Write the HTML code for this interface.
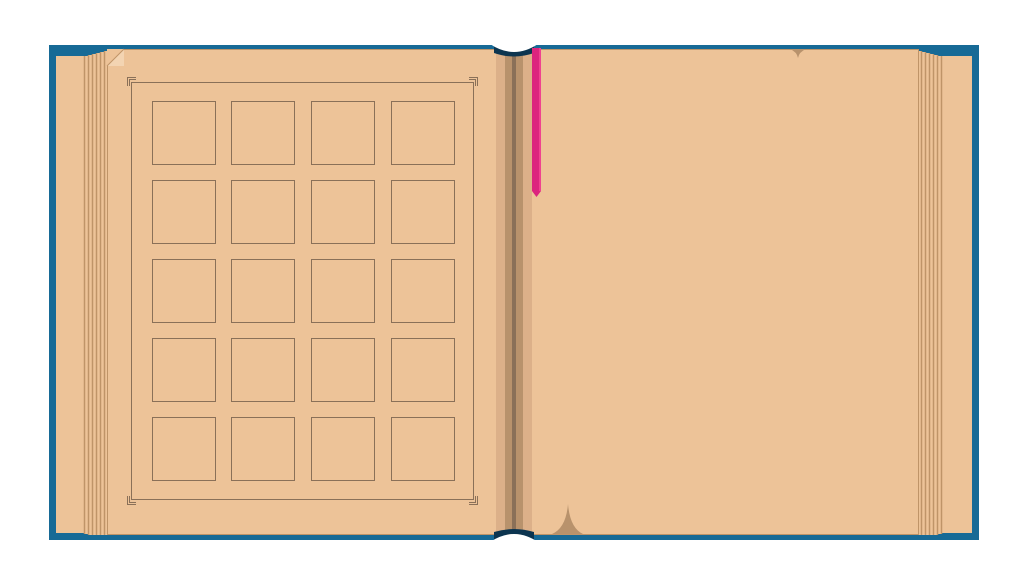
<!DOCTYPE html><html><head><style>
body{margin:0;width:1024px;height:576px;background:#fff;position:relative;overflow:hidden}
div{position:absolute;box-sizing:border-box}
.sq{width:64px;height:64px;border:1px solid #8a7058}
</style></head><body>
<div style="left:49px;top:45px;width:930px;height:495px;background:#176a96"></div>
<div style="left:56px;top:56px;width:30px;height:477px;background:#edc398"></div>
<div style="left:942px;top:56px;width:30px;height:477px;background:#edc398"></div>
<svg style="position:absolute;left:0;top:0" width="1024" height="576">
<g fill="#edc398">
<rect x="84" y="56" width="24" height="478"/><rect x="88" y="55" width="20" height="480"/><rect x="92" y="54" width="16" height="481"/><rect x="96" y="53" width="12" height="482"/><rect x="100" y="52" width="8" height="483"/><rect x="104" y="51" width="4" height="484"/>
<rect x="918" y="56" width="24" height="478"/><rect x="918" y="55" width="20" height="480"/><rect x="918" y="54" width="16" height="481"/><rect x="918" y="53" width="12" height="482"/><rect x="918" y="52" width="8" height="483"/><rect x="918" y="51" width="4" height="484"/>
</g>
<g stroke="#bf9468" stroke-width="1.5">
<line x1="84.5" y1="56" x2="84.5" y2="534"/><line x1="88.5" y1="55" x2="88.5" y2="535"/><line x1="92.5" y1="54" x2="92.5" y2="535"/><line x1="96.5" y1="53" x2="96.5" y2="535"/><line x1="100.5" y1="52" x2="100.5" y2="535"/><line x1="104.5" y1="51" x2="104.5" y2="535"/>
<line x1="921.5" y1="51" x2="921.5" y2="535"/><line x1="925.5" y1="52" x2="925.5" y2="535"/><line x1="929.5" y1="53" x2="929.5" y2="535"/><line x1="933.5" y1="54" x2="933.5" y2="535"/><line x1="937.5" y1="55" x2="937.5" y2="535"/><line x1="941.5" y1="56" x2="941.5" y2="534"/>
</g>
<rect x="107" y="49" width="390" height="486" fill="#edc398"/>
<rect x="531" y="49" width="388" height="486" fill="#edc398"/>
<line x1="107.5" y1="66" x2="107.5" y2="535" stroke="#bf9468"/><line x1="918.5" y1="49" x2="918.5" y2="535" stroke="#bf9468"/>
<line x1="124" y1="49.5" x2="497" y2="49.5" stroke="#bf9468"/><line x1="531" y1="49.5" x2="919" y2="49.5" stroke="#bf9468"/>
<line x1="107" y1="534.5" x2="497" y2="534.5" stroke="#bf9468"/><line x1="531" y1="534.5" x2="919" y2="534.5" stroke="#bf9468"/>
<rect x="496" y="49" width="36" height="486" fill="#dcb089"/>
<rect x="505" y="49" width="18" height="486" fill="#b8926c"/>
<rect x="512" y="49" width="4" height="486" fill="#8a7058"/>
<path d="M494 45 Q514 58 534 45 L534 53 Q514 60 494 53Z" fill="#0c3550"/>
<path d="M494 540 Q514 528 534 540 L534 532 Q514 526 494 532Z" fill="#0c3550"/>
<path d="M490 44 Q514 60 538 44 L538 40 L490 40Z" fill="#fff"/>
<path d="M490 542 Q514 526 538 542 L538 546 L490 546Z" fill="#fff"/>
<path d="M124 49 L124 66 L107 66Z" fill="#f3d4b2"/><path d="M124 49 L107 66" stroke="#bf9468"/>
<rect x="532" y="48" width="9" height="143" fill="#dc247e"/><path d="M532 191 L541 191 L536.5 197Z" fill="#dc247e"/>
<rect x="539" y="48" width="2" height="143" fill="#f0418f"/>
<path d="M552 534 Q566 528 568 504 Q570 528 583 534Z" fill="#b8926c"/>
<path d="M790 49 Q797 52 798 58 Q799 52 806 49Z" fill="#b8926c"/>
<rect x="131.5" y="82.5" width="342" height="417" fill="none" stroke="#8a7058"/>
<g fill="none" stroke="#8a7058" stroke-width="1">
<path d="M127.5 86 V77.5 H136 M129.5 86 V79.5 H136"/><path d="M477.5 86 V77.5 H469 M475.5 86 V79.5 H469"/>
<path d="M127.5 496 V504.5 H136 M129.5 496 V502.5 H136"/><path d="M477.5 496 V504.5 H469 M475.5 496 V502.5 H469"/>
</g>
</svg>
<div class="sq" style="left:152px;top:101px"></div><div class="sq" style="left:231px;top:101px"></div><div class="sq" style="left:311px;top:101px"></div><div class="sq" style="left:391px;top:101px"></div>
<div class="sq" style="left:152px;top:180px"></div><div class="sq" style="left:231px;top:180px"></div><div class="sq" style="left:311px;top:180px"></div><div class="sq" style="left:391px;top:180px"></div>
<div class="sq" style="left:152px;top:259px"></div><div class="sq" style="left:231px;top:259px"></div><div class="sq" style="left:311px;top:259px"></div><div class="sq" style="left:391px;top:259px"></div>
<div class="sq" style="left:152px;top:338px"></div><div class="sq" style="left:231px;top:338px"></div><div class="sq" style="left:311px;top:338px"></div><div class="sq" style="left:391px;top:338px"></div>
<div class="sq" style="left:152px;top:417px"></div><div class="sq" style="left:231px;top:417px"></div><div class="sq" style="left:311px;top:417px"></div><div class="sq" style="left:391px;top:417px"></div>
</body></html>
